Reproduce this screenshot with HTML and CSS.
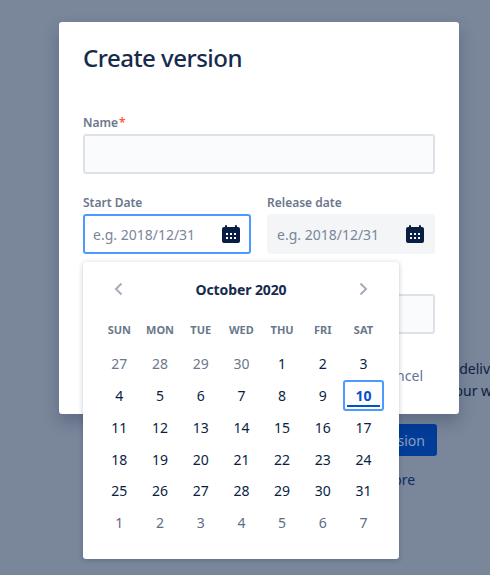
FILE: index.html
```html
<!DOCTYPE html>
<html lang="en">
  <head>
    <meta charset="utf-8">
    <title>Create version</title>
    <link rel="stylesheet" href="styles.css">
  </head>

  <body>
    <div class="page">
      <div class="emptyState">
        <p class="emptyText">Versions help you package and schedule project deliveries to your team.</p>
        <p class="emptyText">Add a version to start collecting your work.</p>
        <button class="emptyButton">Create version</button>
        <a class="emptyLink">Learn more</a>
      </div>
    </div>

    <div class="modal">
      <h1>Create version</h1>

      <label class="fieldLabel">Name<span class="required">*</span></label>
      <input type="text" class="textField">

      <div class="dateRow">
        <div class="dateCol">
          <label class="fieldLabel">Start Date</label>
          <div class="dateField dateFocus">
            <span class="datePlaceholder">e.g. 2018/12/31</span>
            <svg class="calIcon" viewBox="0 0 24 24"><path fill-rule="evenodd" d="M5 5h14a2 2 0 0 1 2 2v12a2 2 0 0 1-2 2H5a2 2 0 0 1-2-2V7a2 2 0 0 1 2-2zM6 4a1 1 0 0 1 2 0v1H6V4zm10 0a1 1 0 0 1 2 0v1h-2V4zM7 13v-2h2v2H7zm4 0v-2h2v2h-2zm4 0v-2h2v2h-2zM7 17v-2h2v2H7zm4 0v-2h2v2h-2zm4 0v-2h2v2h-2z"/></svg>
          </div>

          <div class="calendar">
            <div class="calHeader">
              <svg class="calNav" viewBox="0 0 24 24"><path d="M14.5 6.5 9 12l5.5 5.5" /></svg>
              <span class="calMonth">October 2020</span>
              <svg class="calNav" viewBox="0 0 24 24"><path d="M9.5 6.5 15 12l-5.5 5.5" /></svg>
            </div>
            <div class="calGrid">
              <span class="calDow">SUN</span><span class="calDow">MON</span><span class="calDow">TUE</span><span class="calDow">WED</span><span class="calDow">THU</span><span class="calDow">FRI</span><span class="calDow">SAT</span>
              <span class="calDay muted">27</span><span class="calDay muted">28</span><span class="calDay muted">29</span><span class="calDay muted">30</span><span class="calDay">1</span><span class="calDay">2</span><span class="calDay">3</span>
              <span class="calDay">4</span><span class="calDay">5</span><span class="calDay">6</span><span class="calDay">7</span><span class="calDay">8</span><span class="calDay">9</span><span class="calDay today">10</span>
              <span class="calDay">11</span><span class="calDay">12</span><span class="calDay">13</span><span class="calDay">14</span><span class="calDay">15</span><span class="calDay">16</span><span class="calDay">17</span>
              <span class="calDay">18</span><span class="calDay">19</span><span class="calDay">20</span><span class="calDay">21</span><span class="calDay">22</span><span class="calDay">23</span><span class="calDay">24</span>
              <span class="calDay">25</span><span class="calDay">26</span><span class="calDay">27</span><span class="calDay">28</span><span class="calDay">29</span><span class="calDay">30</span><span class="calDay">31</span>
              <span class="calDay muted2">1</span><span class="calDay muted2">2</span><span class="calDay muted2">3</span><span class="calDay muted2">4</span><span class="calDay muted2">5</span><span class="calDay muted2">6</span><span class="calDay muted2">7</span>
            </div>
          </div>
        </div>

        <div class="dateCol">
          <label class="fieldLabel">Release date</label>
          <div class="dateField">
            <span class="datePlaceholder">e.g. 2018/12/31</span>
            <svg class="calIcon" viewBox="0 0 24 24"><path fill-rule="evenodd" d="M5 5h14a2 2 0 0 1 2 2v12a2 2 0 0 1-2 2H5a2 2 0 0 1-2-2V7a2 2 0 0 1 2-2zM6 4a1 1 0 0 1 2 0v1H6V4zm10 0a1 1 0 0 1 2 0v1h-2V4zM7 13v-2h2v2H7zm4 0v-2h2v2h-2zm4 0v-2h2v2h-2zM7 17v-2h2v2H7zm4 0v-2h2v2h-2zm4 0v-2h2v2h-2z"/></svg>
          </div>
        </div>
      </div>

      <label class="fieldLabel">Description</label>
      <input type="text" class="textField">

      <div class="modalFooter">
        <span class="cancelLink">Cancel</span>
      </div>
    </div>
  </body>
</html>
```

FILE: styles.css
```css
html, body {
  height: 100%;
}

body {
  margin: 0;
  overflow: hidden;
  font-family: 'Noto Sans', sans-serif;
  color: #172b4d;
  background-color: #7a869a;
}

.page {
  height: 100%;
  overflow: hidden;
}

.emptyState {
  display: flex;
  flex-direction: column;
  align-items: center;
  width: 500px;
  margin-left: 127px;
  padding-top: 358px;
}

.emptyText {
  margin: 0;
  font-size: 14px;
  line-height: 22px;
  white-space: nowrap;
  color: #0e1f3f;
}

.emptyButton {
  height: 32px;
  margin-top: 22px;
  padding: 0 12px 0 13px;
  font-family: inherit;
  font-size: 14px;
  color: #8c9cc0;
  background-color: #003d99;
  border: none;
  border-radius: 3px;
}

.emptyLink {
  margin-top: 14px;
  font-size: 14px;
  color: #0e2a63;
}

.modal {
  position: absolute;
  top: 22px;
  left: 59px;
  width: 352px;
  height: 344px;
  padding: 24px;
  background-color: white;
  border-radius: 3px;
  box-shadow: 0 8px 16px rgba(9, 30, 66, 0.25);
}

h1 {
  margin: -2px 0 43px 0;
  font-size: 24px;
  font-weight: 500;
  line-height: 28px;
  letter-spacing: -0.5px;
  color: #172b4d;
}

.fieldLabel {
  display: block;
  margin-bottom: 3px;
  font-size: 12px;
  font-weight: 600;
  line-height: 16px;
  color: #6b778c;
}

.required {
  margin-left: 1px;
  color: #ff5630;
}

.textField {
  display: block;
  box-sizing: border-box;
  width: 100%;
  height: 40px;
  background-color: #fafbfc;
  border: 2px solid #dfe1e6;
  border-radius: 3px;
}

.dateRow {
  display: flex;
  gap: 16px;
  margin: 21px 0;
}

.dateCol {
  position: relative;
  flex: 1;
}

.dateField {
  display: flex;
  align-items: center;
  justify-content: space-between;
  box-sizing: border-box;
  height: 40px;
  padding: 0 8px 0 10px;
  background-color: #f4f5f7;
  border-radius: 3px;
}

.dateFocus {
  padding: 0 6px 0 8px;
  background-color: white;
  border: 2px solid #4c9aff;
}

.datePlaceholder {
  font-size: 14px;
  color: #7a869a;
}

.calIcon {
  width: 24px;
  height: 24px;
  fill: #091e42;
}

.calendar {
  position: absolute;
  z-index: 2;
  top: 67px;
  left: 0;
  width: 316px;
  height: 297px;
  background-color: white;
  border-radius: 3px;
  box-shadow: 0 1px 5px rgba(9, 30, 66, 0.25);
}

.calHeader {
  display: flex;
  align-items: center;
  justify-content: space-between;
  padding: 15px 24px 0 24px;
}

.calMonth {
  font-size: 14px;
  font-weight: 700;
  letter-spacing: -0.1px;
  color: #172b4d;
}

.calNav {
  width: 24px;
  height: 24px;
  fill: none;
  stroke: #a5adba;
  stroke-width: 2;
}

.calGrid {
  display: grid;
  grid-template-columns: repeat(7, 40.7px);
  grid-auto-rows: 31.8px;
  padding: 15px 16px 0 16px;
}

.calDow {
  display: flex;
  align-items: center;
  justify-content: center;
  height: 26px;
  font-size: 11px;
  font-weight: 700;
  color: #6b778c;
}

.calDay {
  position: relative;
  display: flex;
  align-items: center;
  justify-content: center;
  font-size: 14px;
  color: #091e42;
}

.muted {
  color: #6b778c;
}

.muted2 {
  color: #5e6c84;
}

.today {
  box-sizing: border-box;
  font-weight: 700;
  color: #0052cc;
  border: 2px solid #4c9aff;
  border-radius: 3px;
}

.today::after {
  content: "";
  position: absolute;
  right: 2px;
  bottom: 2px;
  left: 2px;
  height: 2px;
  background-color: #0052cc;
}

.modalFooter {
  display: flex;
  justify-content: flex-end;
  margin-top: 32px;
}

.cancelLink {
  margin-right: 12px;
  font-size: 14px;
  color: #5e7698;
}
```
